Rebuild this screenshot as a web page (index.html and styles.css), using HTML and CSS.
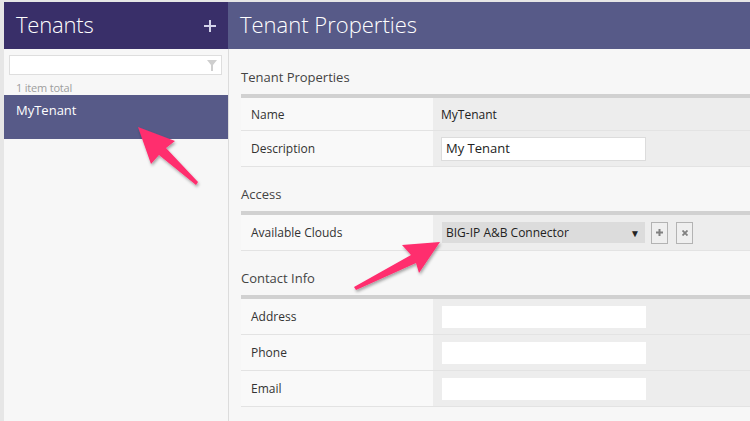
FILE: index.html
```html
<!DOCTYPE html>
<html>
<head>
<meta charset="utf-8">
<link rel="stylesheet" href="styles.css">
</head>
<body>
<div class="app">
  <aside class="side">
    <div class="side-head">
      <span class="side-title">Tenants</span>
      <svg class="add" width="12" height="12" viewBox="0 0 12 12"><path d="M6 0v12M0 6h12" stroke="#d4d4ea" stroke-width="2"/></svg>
    </div>
    <div class="filter">
      <svg class="funnel" width="10" height="11" viewBox="0 0 10 11"><path d="M0 0h10L6 5v6H4V5z" fill="#cfcfcf"/></svg>
    </div>
    <div class="count">1 item total</div>
    <div class="item selected">MyTenant</div>
  </aside>
  <main class="main">
    <div class="main-head">Tenant Properties</div>
    <div class="content">
      <div class="sec-title">Tenant Properties</div>
      <div class="table">
        <div class="row short"><div class="lab">Name</div><div class="val">MyTenant</div></div>
        <div class="row"><div class="lab">Description</div><div class="val"><div class="input bordered">My Tenant</div></div></div>
      </div>
      <div class="sec-title">Access</div>
      <div class="table">
        <div class="row"><div class="lab">Available Clouds</div><div class="val">
          <div class="select"><span>BIG-IP A&amp;B Connector</span><span class="caret">▼</span></div>
          <div class="btn"><svg width="7" height="7" viewBox="0 0 7 7"><path d="M3.5 0v7M0 3.5h7" stroke="#808080" stroke-width="2"/></svg></div>
          <div class="btn x"><svg width="6" height="6" viewBox="0 0 6 6"><path d="M0.5 0.5l5 5M5.5 0.5l-5 5" stroke="#808080" stroke-width="1.8"/></svg></div>
        </div></div>
      </div>
      <div class="sec-title">Contact Info</div>
      <div class="table">
        <div class="row"><div class="lab">Address</div><div class="val"><div class="input"></div></div></div>
        <div class="row"><div class="lab">Phone</div><div class="val"><div class="input"></div></div></div>
        <div class="row"><div class="lab">Email</div><div class="val"><div class="input"></div></div></div>
      </div>
    </div>
  </main>
  <svg class="arrows" width="750" height="421" viewBox="0 0 750 421">
    <defs>
      <filter id="sh" x="-20%" y="-20%" width="140%" height="140%">
        <feDropShadow dx="1" dy="2" stdDeviation="1.5" flood-color="#000" flood-opacity="0.35"/>
      </filter>
    </defs>
    <polygon filter="url(#sh)" fill="#ff2d6e" points="138,127 175,141 166,148 198,182 196,185 159,155 151,164"/>
    <polygon filter="url(#sh)" fill="#ff2d6e" points="440,242 402,245 411,255 354,287 356,290 416,263 419,273"/>
  </svg>
</div>
</body>
</html>
```
FILE: styles.css
```css
html, body { margin: 0; padding: 0; }
body { font-family: "Open Sans", "Liberation Sans", sans-serif; }
.app {
  position: relative;
  width: 750px; height: 421px; box-sizing: border-box;
  padding: 2px 0 0 4px;
  background: #e6e6e6;
  display: grid;
  grid-template-columns: 224px 1fr;
  overflow: hidden;
}
.side { background: #f7f7f7; display: flex; flex-direction: column; }
.side-head {
  height: 47px; box-sizing: border-box; background: #392f69;
  display: flex; align-items: center; justify-content: space-between;
  padding: 0 12px 3px 12px;
}
.side-title { color: #fff; font-size: 22px; font-weight: 300; letter-spacing: -0.2px; }
.add { margin-top: 3px; }
.filter {
  margin: 6px 6px 0 5px; height: 20px; box-sizing: border-box;
  background: #fff; border: 1px solid #dedede;
  display: flex; align-items: center; justify-content: flex-end; padding-right: 4px;
}
.count { font-size: 11px; color: #9e9e9e; padding: 5px 0 0 12px; height: 15px; line-height: 15px; letter-spacing: -0.2px; }
.item { height: 44px; box-sizing: border-box; padding: 6px 12px; font-size: 13px; line-height: 18px; }
.selected { background: #575a88; color: #fff; }
.main { display: flex; flex-direction: column; min-width: 0; }
.main-head {
  height: 47px; background: #575a88; color: #fff;
  font-size: 22px; font-weight: 300; line-height: 45px; padding-left: 12px;
}
.content {
  flex: 1; background: #f7f7f7; border-left: 1px solid #dcdcdc;
  padding: 1px 0 0 12px;
}
.sec-title { height: 44px; box-sizing: border-box; padding-top: 19px; font-size: 13px; line-height: 16px; color: #444; }
.table { border-top: 4px solid #d1d1d1; }
.row { display: flex; height: 35px; border-bottom: 1px solid #e3e3e3; }
.row.short { height: 32px; }
.lab { width: 192px; flex: none; background: #f9f9f9; font-size: 12px; color: #333; padding-left: 10px; box-sizing: border-box; display: flex; align-items: center; }
.val { flex: 1; background: #ededed; font-size: 12px; color: #222; padding-left: 8px; display: flex; align-items: center; }
.input { width: 204px; height: 22px; background: #fff; box-sizing: border-box; padding-left: 4px; font-size: 13px; line-height: 21px; color: #222; margin-left: 1px; }
.input.bordered { border: 1px solid #dcdcdc; width: 205px; height: 24px; margin-left: 0; }
.select {
  width: 203px; height: 21px; margin-left: 1px; background: #dcdcdc; box-sizing: border-box;
  display: flex; align-items: center; justify-content: space-between; padding: 0 5px 0 4px;
  font-size: 12px; color: #222;
}
.caret { font-size: 10px; color: #222; }
.btn {
  width: 17px; height: 22px; box-sizing: border-box; margin-left: 6px;
  border: 1px solid #b3b3b3; background: #efefef;
  display: flex; align-items: center; justify-content: center;
}
.btn.x { margin-left: 8px; }
.arrows { position: absolute; left: 0; top: 0; pointer-events: none; }
```
